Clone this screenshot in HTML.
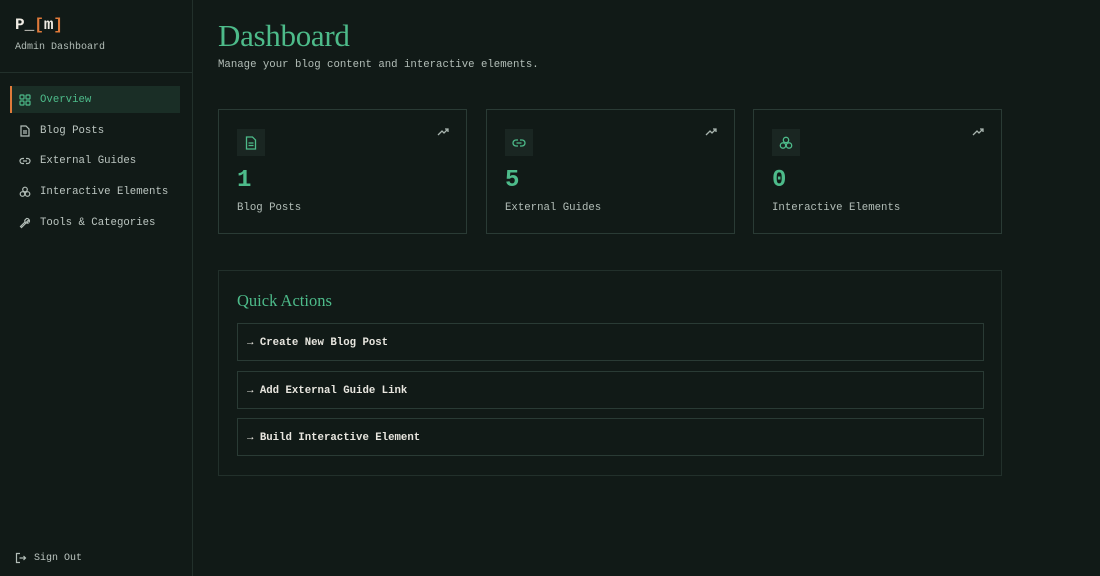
<!DOCTYPE html>
<html><head><meta charset="utf-8"><style>
*{box-sizing:border-box;margin:0;padding:0}
body{width:1100px;height:576px;background:#111a17;font-family:"Liberation Mono",monospace;color:#a9b5af;position:relative;overflow:hidden}
.sb{position:absolute;left:0;top:0;width:193px;height:576px;border-right:1px solid #22302b}
.logo{position:absolute;left:15px;top:16px;font-size:16px;font-weight:bold;color:#f0ece4;font-family:"Liberation Mono",monospace}
.logo span{color:#e07a3a}
.sub{position:absolute;left:15px;top:42px;font-size:10px;color:#b3beb8}
.hr{position:absolute;left:0;top:72px;width:192px;border-top:1px solid #22302b}
.nav{position:absolute;left:10px;width:170px;height:27px;font-size:10.7px;display:flex;align-items:center;padding-left:9px;color:#bcc6c1}
.nav svg{margin-right:9px}
.nav.act{background:#1a2e26;color:#4dbb8a;border-left:2px solid #e07a3a;padding-left:7px}
.so{position:absolute;left:15px;top:552px;font-size:10px;display:flex;align-items:center;color:#bcc6c1}
.so svg{margin-right:7px}
h1{position:absolute;left:218px;top:18px;font-family:"Liberation Serif",serif;font-weight:normal;font-size:31px;color:#4dbb8a;letter-spacing:-0.3px}
.desc{position:absolute;left:218px;top:59px;font-size:10.7px;color:#b3beb8}
.card{position:absolute;top:109px;width:249px;height:125px;border:1px solid #2a3b35;background:#111a17}
.ic{position:absolute;left:18px;top:19px;width:28px;height:27px;background:#1a2622;display:flex;align-items:center;justify-content:center}
.tr{position:absolute;right:17px;top:18px}
.num{position:absolute;left:18px;top:57px;font-size:24px;font-weight:bold;color:#4dbb8a}
.lab{position:absolute;left:18px;top:92px;font-size:10.7px;color:#b3beb8}
.qa{position:absolute;left:218px;top:270px;width:784px;height:206px;border:1px solid #22302b}
.qa h2{position:absolute;left:18px;top:20px;font-family:"Liberation Serif",serif;font-weight:normal;font-size:16.5px;color:#4dbb8a}
.btn{position:absolute;left:18px;width:747px;height:38px;border:1px solid #2a3b35;font-size:10.7px;font-weight:bold;color:#e8e6df;padding-left:9px;padding-top:2px;display:flex;align-items:center}
</style></head><body>
<div class="sb">
<div class="logo">P_<span>[</span>m<span>]</span></div>
<div class="sub">Admin Dashboard</div>
<div class="hr"></div>
<div class="nav act" style="top:86px"><svg width="12" height="12" viewBox="0 0 12 12" fill="none" stroke="#4dbb8a" stroke-width="1.2"><rect x="1" y="1" width="4" height="4" rx=".8"/><rect x="7" y="1" width="4" height="4" rx=".8"/><rect x="1" y="7" width="4" height="4" rx=".8"/><rect x="7" y="7" width="4" height="4" rx=".8"/></svg>Overview</div>
<div class="nav" style="top:117px"><svg width="12" height="12" viewBox="0 0 12 12" fill="none" stroke="#b3beb8" stroke-width="1.2"><path d="M2 1h5l3 3v7H2z M4 6h4M4 8h4"/></svg>Blog Posts</div>
<div class="nav" style="top:147px"><svg width="12" height="12" viewBox="0 0 12 12" fill="none" stroke="#b3beb8" stroke-width="1.2"><path d="M5 3.5H3.5a2.5 2.5 0 000 5H5M7 3.5h1.5a2.5 2.5 0 010 5H7M4 6h4"/></svg>External Guides</div>
<div class="nav" style="top:178px"><svg width="12" height="12" viewBox="0 0 12 12" fill="none" stroke="#b3beb8" stroke-width="1.2"><circle cx="6" cy="3.5" r="2.3"/><circle cx="3.5" cy="8" r="2.3"/><circle cx="8.5" cy="8" r="2.3"/></svg>Interactive Elements</div>
<div class="nav" style="top:209px"><svg width="12" height="12" viewBox="0 0 12 12" fill="none" stroke="#b3beb8" stroke-width="1.2"><path d="M7.5 1.5a2.5 2.5 0 012.8 3.3L9 3.5 7.8 4.7l1.3 1.3A2.5 2.5 0 015.8 3.3zM6 5l-4.5 4.5 1 1L7 6"/></svg>Tools &amp; Categories</div>
<div class="so"><svg width="12" height="12" viewBox="0 0 12 12" fill="none" stroke="#b3beb8" stroke-width="1.2"><path d="M5 1.5H1.5v9H5M4.5 6h6M8.5 4l2 2-2 2"/></svg>Sign Out</div>
</div>
<h1>Dashboard</h1>
<div class="desc">Manage your blog content and interactive elements.</div>
<div class="card" style="left:218px"><div class="ic"><svg width="12" height="14" viewBox="0 0 12 14" fill="none" stroke="#4dbb8a" stroke-width="1.3"><path d="M1.5 1h6l3 3v9h-9z M3.5 7h5M3.5 9.5h5"/></svg></div><svg class="tr" width="12" height="8" viewBox="0 0 12 8" fill="none" stroke="#a9b5af" stroke-width="1.3"><path d="M1 7l4-4 2 2 4-4M8 1h3v3"/></svg><div class="num">1</div><div class="lab">Blog Posts</div></div>
<div class="card" style="left:486px"><div class="ic"><svg width="14" height="10" viewBox="0 0 14 10" fill="none" stroke="#4dbb8a" stroke-width="1.3"><path d="M6 2H4a3 3 0 000 6h2M8 2h2a3 3 0 010 6H8M4.5 5h5"/></svg></div><svg class="tr" width="12" height="8" viewBox="0 0 12 8" fill="none" stroke="#a9b5af" stroke-width="1.3"><path d="M1 7l4-4 2 2 4-4M8 1h3v3"/></svg><div class="num">5</div><div class="lab">External Guides</div></div>
<div class="card" style="left:753px"><div class="ic"><svg width="14" height="14" viewBox="0 0 14 14" fill="none" stroke="#4dbb8a" stroke-width="1.3"><circle cx="7" cy="4" r="2.7"/><circle cx="4" cy="9.5" r="2.7"/><circle cx="10" cy="9.5" r="2.7"/></svg></div><svg class="tr" width="12" height="8" viewBox="0 0 12 8" fill="none" stroke="#a9b5af" stroke-width="1.3"><path d="M1 7l4-4 2 2 4-4M8 1h3v3"/></svg><div class="num">0</div><div class="lab">Interactive Elements</div></div>
<div class="qa"><h2>Quick Actions</h2>
<div class="btn" style="top:52px">→ Create New Blog Post</div>
<div class="btn" style="top:100px">→ Add External Guide Link</div>
<div class="btn" style="top:147px">→ Build Interactive Element</div>
</div>
</body></html>
